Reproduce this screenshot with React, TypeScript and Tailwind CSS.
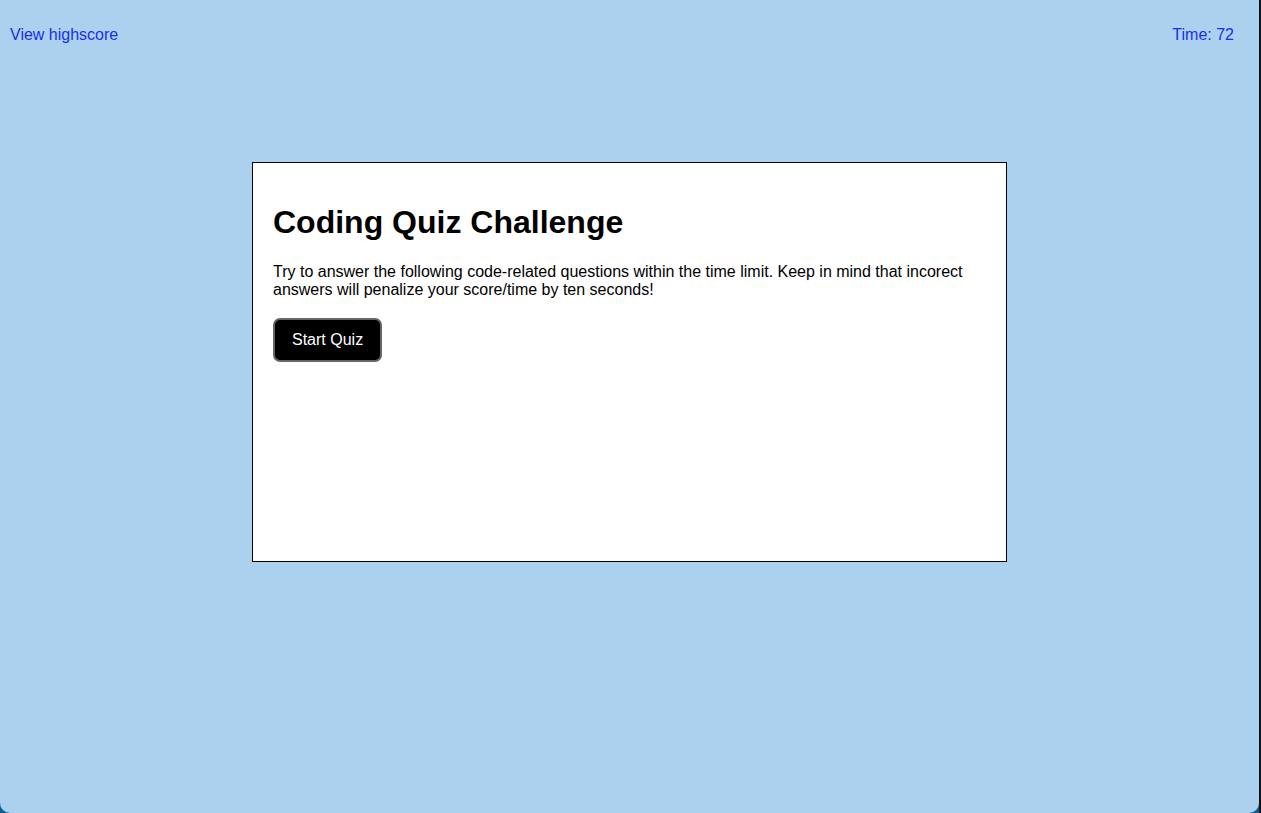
export default function App() {
  return (
    <div className="h-[813px] w-[1261px] bg-[#0b5f94] flex" style={{ fontFamily: '"Liberation Sans", Arial, sans-serif' }}>
      <div className="w-[1259px] h-[813px] bg-[#abd1ee] rounded-b-[10px] flex flex-col">
        <header className="flex justify-between items-center pl-[10px] pr-[25px] pt-[26px] text-[16px] leading-[18px] text-[#1a2fe6]">
          <a className="cursor-pointer">View highscore</a>
          <span>Time: 72</span>
        </header>
        <div className="flex justify-center mt-[118px]">
          <div className="w-[755px] h-[400px] bg-white border border-black px-[20px] pt-[20px]">
            <h1 className="text-[32px] font-bold leading-[37px] mt-[21px] text-black">Coding Quiz Challenge</h1>
            <p className="text-[16px] leading-[18px] mt-[22px] text-black">
              Try to answer the following code-related questions within the time limit. Keep in mind that incorect answers will penalize your score/time by ten seconds!
            </p>
            <button className="mt-[19px] h-[44px] px-[17px] bg-black text-white text-[16px] leading-[18px] rounded-[7px] border-2 border-[#666]">
              Start Quiz
            </button>
          </div>
        </div>
      </div>
      <div className="w-[2px] h-[813px] bg-[#111]" />
    </div>
  );
}
